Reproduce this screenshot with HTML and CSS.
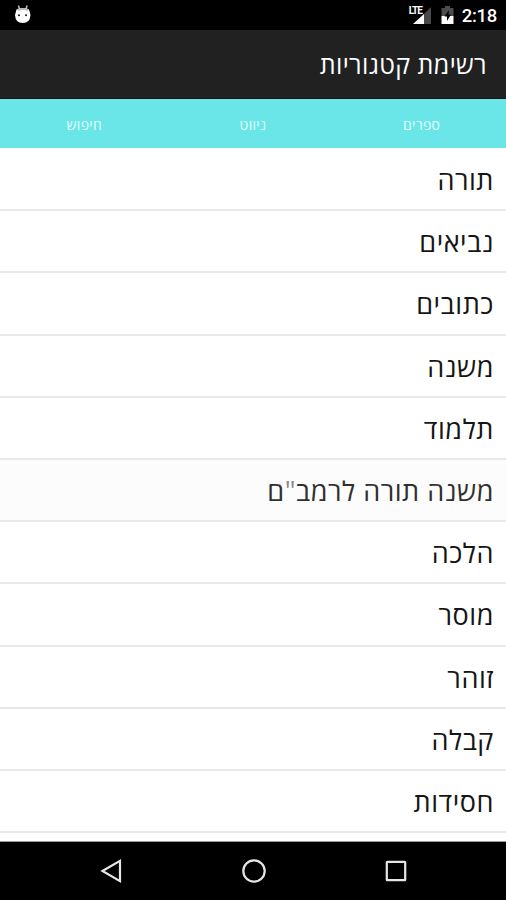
FILE: index.html
```html
<!DOCTYPE html>
<html lang="he" dir="rtl">
<head>
    <meta charset="UTF-8">
    <meta name="viewport" content="width=device-width, initial-scale=1.0">
    <title>רשימת קטגוריות</title>
    <link rel="stylesheet" href="styles.css">
</head>
<body>
    <div class="status-bar">
        <svg class="debug-icon" width="18" height="20" viewBox="0 0 18 20">
            <path d="M4.500 0.500l1 4M13 0.500l-1 4" stroke="#bbb" stroke-width="1.500"/>
            <path d="M2.500 4.500Q9 1.500 15 4.500L16.500 10Q16 18 8.700 18T1 10Z" fill="#fff"/>
            <path d="M4 5Q9 3 14 5" stroke="#bbb" stroke-width="2" fill="none"/>
            <circle cx="5" cy="10.300" r="1" fill="#111"/>
            <circle cx="12" cy="10.300" r="1" fill="#111"/>
        </svg>
        <div class="status-icons">
            <div class="signal">
                <svg width="24" height="20" viewBox="0 0 24 20">
                    <path d="M6 19L23 2v17Z" fill="#484848"/>
                    <path d="M5 19L16 9V19Z" fill="#fff"/>
                </svg>
                <span class="lte">LTE</span>
            </div>
            <svg class="battery" width="13" height="20" viewBox="0 0 13 20">
                <path d="M0.500 3h3.500V1h5v2h3.500v8H0.500Z" fill="#4c4c4c"/>
                <path d="M0.500 11h12v8H0.500Z" fill="#fff"/>
                <path d="M8 5L3.500 11.500H6V16l4-6.500H7.500Z" fill="#000"/>
            </svg>
            <span class="clock">2:18</span>
        </div>
    </div>
    <header class="title-bar">
        <h1>רשימת קטגוריות</h1>
    </header>
    <nav class="tabs">
        <a href="#">ספרים</a>
        <a href="#">ניווט</a>
        <a href="#">חיפוש</a>
    </nav>
    <ul class="categories">
        <li>תורה</li>
        <li>נביאים</li>
        <li>כתובים</li>
        <li>משנה</li>
        <li>תלמוד</li>
        <li class="selected">משנה תורה לרמב<span class="quote">"</span>ם</li>
        <li>הלכה</li>
        <li>מוסר</li>
        <li>זוהר</li>
        <li>קבלה</li>
        <li>חסידות</li>
    </ul>
    <div class="nav-bar">
        <svg width="26" height="26" viewBox="0 0 26 26"><path d="M3.500 13L21 2.800V23.200Z"/></svg>
        <svg width="26" height="26" viewBox="0 0 26 26"><circle cx="13" cy="13" r="10.700"/></svg>
        <svg width="26" height="26" viewBox="0 0 26 26"><rect x="3.800" y="3.800" width="18.400" height="18.400" rx="0.500"/></svg>
    </div>
</body>
</html>
```
FILE: styles.css
```css
:root {
    --bar: #212121;
    --turquoise: #6ae5e8;
    --line: #e9e9e9;
}

* {
    box-sizing: border-box;
}

body {
    margin: 0;
    height: 900px;
    display: flex;
    flex-direction: column;
    overflow: hidden;
    font-family: "Open Sans", "Noto Sans", sans-serif;
    background-color: #fff;
    color: #151515;
}

.status-bar {
    direction: ltr;
    height: 30px;
    flex: none;
    display: flex;
    justify-content: space-between;
    padding: 5px 9px 0 14px;
    background-color: #000;
    color: #fff;
}

.status-icons {
    display: flex;
}

.signal {
    position: relative;
    width: 26px;
    height: 20px;
    padding-left: 2px;
}

.lte {
    position: absolute;
    left: 3px;
    top: 1px;
    font: bold 10px/10px Roboto, sans-serif;
    letter-spacing: -1px;
}

.battery {
    margin: 0 8px 0 9px;
}

.clock {
    font: 500 18.500px/22px Roboto, sans-serif;
    letter-spacing: -0.3px;
}

.title-bar {
    height: 69px;
    flex: none;
    display: flex;
    align-items: center;
    padding: 0 19px;
    background-color: var(--bar);
    border-bottom: 1px solid #061515;
    color: #fff;
}

.title-bar h1 {
    margin: 0;
    font-size: 25px;
    font-weight: 400;
    letter-spacing: 0.4px;
}

.tabs {
    height: 49px;
    flex: none;
    display: flex;
    align-items: center;
    padding-top: 2px;
    background-color: var(--turquoise);
}

.tabs a {
    flex: 1;
    text-align: center;
    text-decoration: none;
    font-size: 14px;
    letter-spacing: 0.3px;
    color: #e4ffff;
}

.categories {
    flex: 1;
    min-height: 0;
    margin: 0;
    padding: 1px 0 0;
    list-style: none;
    border-bottom: 1px solid #999;
}

.categories li {
    height: 62.200px;
    display: flex;
    align-items: center;
    padding: 1px 12px 0;
    border-bottom: 2px solid var(--line);
    font-size: 27px;
    letter-spacing: 0.55px;
    white-space: pre;
}

.categories .selected {
    background-color: #fcfcfc;
    color: #303030;
}

.quote {
    color: #8a8a8a;
}

.nav-bar {
    direction: ltr;
    height: 58px;
    flex: none;
    display: flex;
    justify-content: center;
    align-items: center;
    gap: 116px;
    padding-left: 2px;
    background-color: #000;
}

.nav-bar svg {
    fill: none;
    stroke: #e6e6e6;
    stroke-width: 2.200;
}
```
